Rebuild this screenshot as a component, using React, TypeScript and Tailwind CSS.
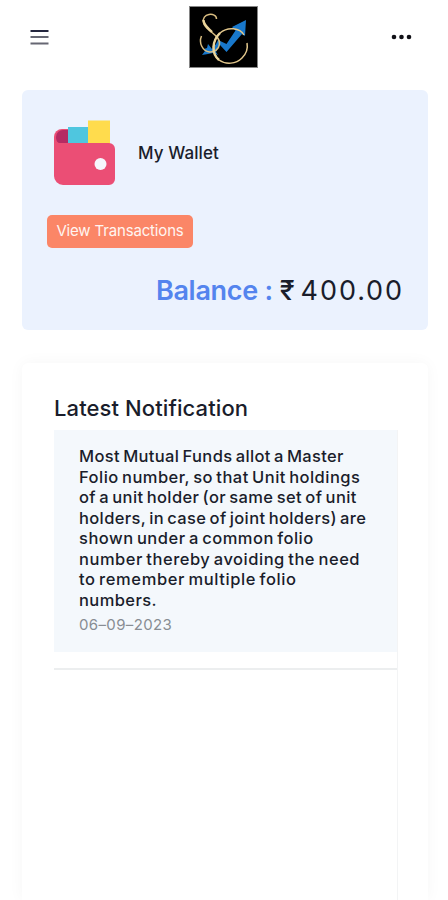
import React from "react";

const message = [
  { text: "Most Mutual Funds allot a Master", style: "tracking-[0.35px]" },
  { text: "Folio number, so that Unit holdings", style: "tracking-[0.46px]" },
  { text: "of a unit holder (or same set of unit", style: "tracking-[0.38px]" },
  { text: "holders, in case of joint holders) are", style: "tracking-[0.36px]" },
  { text: "shown under a common folio", style: "tracking-[0.49px]" },
  { text: "number thereby avoiding the need", style: "tracking-[0.52px]" },
  { text: "to remember multiple folio", style: "tracking-[0.6px]" },
  { text: "numbers.", style: "tracking-[0.4px]" },
];

function Logo() {
  return (
    <svg width="70" height="64" viewBox="0 0 70 64" fill="none">
      <rect x=".5" y="1.5" width="68" height="61" fill="#000" stroke="#858585" />
      <path d="M13 50l3-4-1-2 3-1 1-4 4 5 4-5 2-4 8.500 4 9-13.500-3.500-3.500L57 15l-1 16-3-2-15.500 18-6.500-7-4 7 2 3-5-2-5 1z" fill="#1878cc" />
      <path d="M27.500 14c0-4-4-5-7.500-4.500-4 .5-6.500 4-5.500 8 1 5 5 6.500 8.500 10 5 4 8 7 7.500 11.500-.5 5-5 8.500-10 8-7-1-11-9-8-16" stroke="#d9bd81" strokeWidth="1.500" />
      <path d="M14.500 15c0 5 4.500 8 8.500 12" stroke="#ead49b" strokeWidth="2.400" />
      <path d="M55 30c-4-7-16-9-24-2-8 8-9 20-1 27 7 5 17 4 23-2 5-5 6-10 5-15" stroke="#e2c78c" strokeWidth="1.500" />
      <path d="M31 28c-8 8-9 20-1 27" stroke="#ead49b" strokeWidth="2.400" />
    </svg>
  );
}

function WalletIcon() {
  return (
    <svg width="62" height="66" viewBox="0 0 62 66">
      <path d="M0 17a8 8 0 0 1 8-8h12v20H0z" fill="#eb4e75" />
      <path d="M2 17a7 7 0 0 1 7-7h8v14H7c-3 0-5-3-5-7z" fill="#b52b63" />
      <path d="M14 7h21v22H14z" fill="#4fc6df" />
      <path d="M34 .5h22V30H34z" fill="#ffdc4d" />
      <path d="M0 17c0 4 3 6 7 6h48a6 6 0 0 1 6 6v30a6 6 0 0 1-6 6H9a9 9 0 0 1-9-9z" fill="#eb4e75" />
      <circle cx="46.5" cy="44" r="6" fill="#f6f6fc" />
    </svg>
  );
}

export default function App() {
  return (
    <main className="flex h-[900px] w-[448px] flex-col overflow-hidden bg-white font-['Inter',sans-serif] text-[#1a1d2b]">
      <header className="flex h-[90px] shrink-0 items-start justify-between pl-[30px] pr-[36px]">
        <svg className="mt-[29px]" width="19" height="17" viewBox="0 0 19 17">
          <path d="M.5 2h18" stroke="#24263f" strokeWidth="2" />
          <path d="M.5 8h18M.5 14.5h18" stroke="#666773" strokeWidth="2" />
        </svg>
        <div className="mt-[5px] ml-[7px]"><Logo /></div>
        <svg className="mt-[34px]" width="21" height="6" viewBox="0 0 21 6" fill="#111117">
          <circle cx="3" cy="3" r="2.3" /><circle cx="10.5" cy="3" r="2.3" /><circle cx="18" cy="3" r="2.3" />
        </svg>
      </header>

      <section className="ml-[22px] flex h-[240px] w-[406px] shrink-0 flex-col rounded-md bg-[#ebf2fe] pl-[25px] pr-[24px]">
        <div className="flex h-[125px] items-start pl-[7px] pt-[30px]">
          <WalletIcon />
          <h2 className="ml-[22px] mt-[20px] whitespace-nowrap text-[17px] font-medium leading-[26px] tracking-[0.1px]">My Wallet</h2>
        </div>
        <button className="flex h-[33px] w-[146px] items-center justify-center whitespace-nowrap rounded-[5px] bg-[#fb8667] text-[15px] tracking-[-0.16px] text-[#fff5f1]">View Transactions</button>
        <div className="mt-[25px] flex items-center justify-end whitespace-nowrap text-[27px] leading-[36px]">
          <span className="font-semibold tracking-[-0.3px] text-[#5484ee]">Balance :</span>
          <span className="ml-[7px] font-medium">₹</span>
          <span className="ml-[6px] tracking-[1.9px]">400.00</span>
        </div>
      </section>

      <section className="ml-[22px] mt-[33px] flex w-[406px] grow flex-col rounded-t-md bg-white pl-[32px] pt-[30px] shadow-[0_0_16px_rgba(0,0,0,0.04)]">
        <h2 className="h-[37px] whitespace-nowrap text-[22px] font-medium leading-[30px] tracking-[0.1px]">Latest Notification</h2>
        <div className="w-[344px] grow border-r border-[#f3f4f5]">
          <article className="h-[222px] bg-[#f4f8fc] pl-[25px] pt-[16px]">
            <p className="text-[16.5px] font-medium leading-[20.5px] [word-spacing:-1.5px]">
              {message.map((line) => (
                <span key={line.text} className={`block whitespace-nowrap ${line.style}`}>{line.text}</span>
              ))}
            </p>
            <time className="mt-[5px] block text-[15px] leading-[20px] tracking-[0.35px] text-[#888d93]">06–09–2023</time>
          </article>
          <div className="h-[18px] border-b-2 border-[#eceeef]" />
        </div>
      </section>
    </main>
  );
}
